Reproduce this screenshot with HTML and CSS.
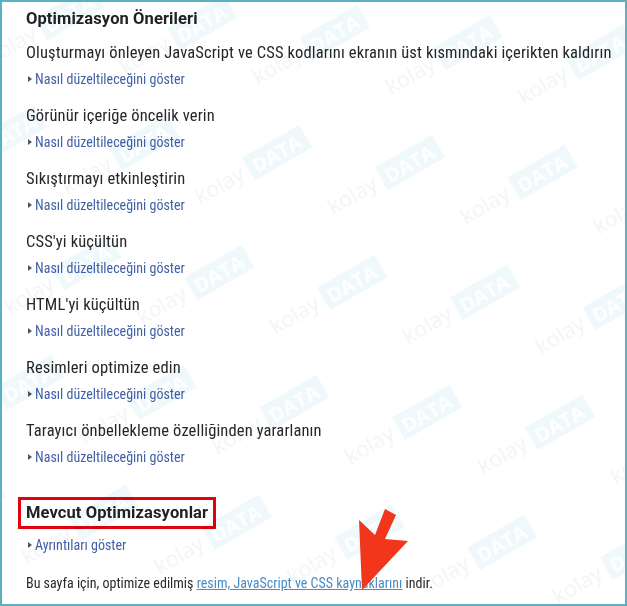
FILE: index.html
```html
<!DOCTYPE html>
<html lang="tr">
<head>
<meta charset="utf-8">
<title>Optimizasyon Önerileri</title>
<link rel="stylesheet" href="styles.css">
</head>
<body>
<div class="page">
  <h2 class="title">Optimizasyon Önerileri</h2>
  <ul class="rules">
    <li class="rule"><p class="rule-name">Oluşturmayı önleyen JavaScript ve CSS kodlarını ekranın üst kısmındaki içerikten kaldırın</p><a class="toggle" href="#">Nasıl düzeltileceğini göster</a></li>
    <li class="rule"><p class="rule-name">Görünür içeriğe öncelik verin</p><a class="toggle" href="#">Nasıl düzeltileceğini göster</a></li>
    <li class="rule"><p class="rule-name">Sıkıştırmayı etkinleştirin</p><a class="toggle" href="#">Nasıl düzeltileceğini göster</a></li>
    <li class="rule"><p class="rule-name">CSS'yi küçültün</p><a class="toggle" href="#">Nasıl düzeltileceğini göster</a></li>
    <li class="rule"><p class="rule-name">HTML'yi küçültün</p><a class="toggle" href="#">Nasıl düzeltileceğini göster</a></li>
    <li class="rule"><p class="rule-name">Resimleri optimize edin</p><a class="toggle" href="#">Nasıl düzeltileceğini göster</a></li>
    <li class="rule"><p class="rule-name">Tarayıcı önbellekleme özelliğinden yararlanın</p><a class="toggle" href="#">Nasıl düzeltileceğini göster</a></li>
  </ul>
  <div class="boxed-row"><h2 class="title boxed">Mevcut Optimizasyonlar</h2></div>
  <div class="details"><a class="toggle" href="#">Ayrıntıları göster</a></div>
  <p class="download">Bu sayfa için, optimize edilmiş <a href="#">resim, JavaScript ve CSS kaynaklarını</a> indir.</p>

  <svg class="watermark" width="623" height="602" aria-hidden="true">
    <defs>
      <pattern id="wm" width="220" height="150" patternUnits="userSpaceOnUse" patternTransform="rotate(-30) translate(-40 10)">
        <text x="0" y="40" class="wm-k">kolay</text>
        <rect x="60" y="20" width="66" height="26" class="wm-box"/>
        <text x="65" y="41" class="wm-d">DATA</text>
        <text x="110" y="115" class="wm-k">kolay</text>
        <rect x="170" y="95" width="66" height="26" class="wm-box"/>
        <text x="175" y="116" class="wm-d">DATA</text>
        <text x="-110" y="115" class="wm-k">kolay</text>
        <rect x="-50" y="95" width="66" height="26" class="wm-box"/>
        <text x="-45" y="116" class="wm-d">DATA</text>
      </pattern>
    </defs>
    <rect width="623" height="602" fill="url(#wm)"/>
  </svg>

  <svg class="arrow" width="80" height="100" viewBox="0 0 80 100" aria-hidden="true">
    <polygon points="20,88 17,18 33,33 43,7 54,13 43,37 66,39" fill="#f2361b"/>
  </svg>
</div>
</body>
</html>
```

FILE: styles.css
```css
* { box-sizing: border-box; }

html, body {
  margin: 0;
  padding: 0;
  background: #ffffff;
}

.page {
  position: relative;
  width: 627px;
  height: 606px;
  border: 2px solid #5cb1bf;
  padding: 6px 0 0 24px;
  overflow: hidden;
  font-family: "Roboto Condensed", Roboto, "Liberation Sans", sans-serif;
  color: #222222;
  background: #ffffff;
}

.title {
  margin: 0 0 12px;
  font-family: Roboto, "Liberation Sans", sans-serif;
  font-size: 16.5px;
  line-height: 22px;
  font-weight: 700;
  color: #212121;
  letter-spacing: 0.1px;
}

.rules {
  list-style: none;
  margin: 0;
  padding: 0;
}

.rule {
  display: flex;
  flex-direction: column;
  align-items: flex-start;
  gap: 5px;
  margin-bottom: 16px;
}

.rule:last-child {
  margin-bottom: 0;
}

.rule-name {
  margin: 0;
  font-size: 16.5px;
  line-height: 22px;
  letter-spacing: 0.12px;
  color: #262626;
}

.toggle {
  display: inline-flex;
  align-items: center;
  gap: 3px;
  padding-left: 2px;
  font-size: 14px;
  line-height: 20px;
  color: #4260a8;
  text-decoration: none;
}

.toggle::before {
  content: "";
  width: 0;
  height: 0;
  border-top: 3.5px solid transparent;
  border-bottom: 3.5px solid transparent;
  border-left: 4px solid #555555;
}

.boxed-row {
  display: flex;
  margin-top: 30px;
  margin-left: -8px;
}

.title.boxed {
  margin: 0;
  padding: 2px 5px;
  border: 3px solid #e5000d;
}

.details {
  display: flex;
  margin-top: 6px;
}

.download {
  margin: 18px 0 0;
  font-size: 14px;
  line-height: 20px;
  color: #2a2a2a;
}

.download a {
  color: #4a8cc4;
  text-decoration: underline;
}

.watermark {
  position: absolute;
  left: 0;
  top: 0;
  pointer-events: none;
  mix-blend-mode: multiply;
}

.wm-k {
  font-family: "Open Sans", sans-serif;
  font-size: 22px;
  fill: #f2f4f5;
}

.wm-box {
  fill: #eff8fb;
}

.wm-d {
  font-family: "Open Sans", sans-serif;
  font-size: 20px;
  font-weight: 700;
  fill: #ffffff;
}

.arrow {
  position: absolute;
  left: 340px;
  top: 500px;
}
```
